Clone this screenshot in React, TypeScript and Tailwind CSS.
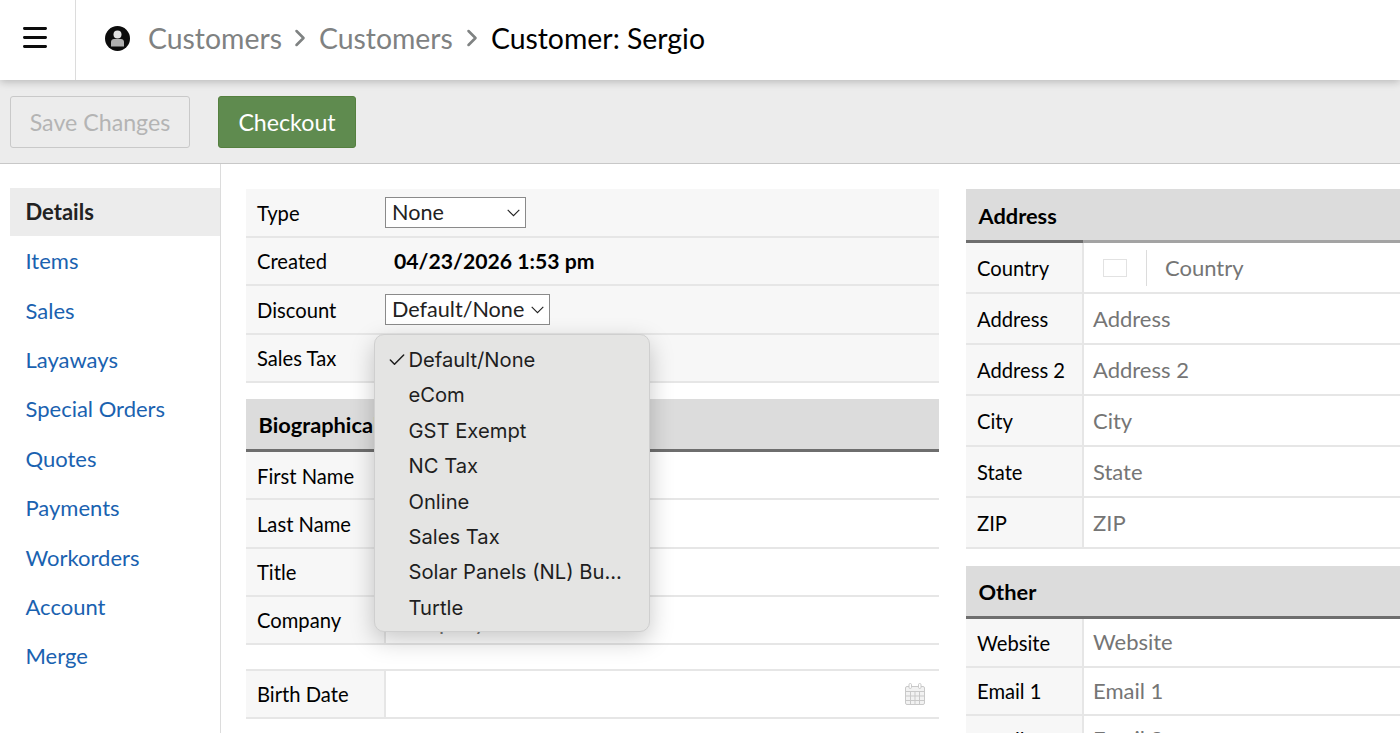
import type { ReactNode } from 'react';
import { ChevronRight, Check } from 'lucide-react';

const NAV = ['Items', 'Sales', 'Layaways', 'Special Orders', 'Quotes', 'Payments', 'Workorders', 'Account', 'Merge'];
const TAXES = ['eCom', 'GST Exempt', 'NC Tax', 'Online', 'Sales Tax', 'Solar Panels (NL) Bu...', 'Turtle'];

function UserBadge() {
  return (
    <svg width="25" height="25" viewBox="0 0 25 25" className="shrink-0">
      <circle cx="12.500" cy="12.500" r="12.500" fill="#0c0c0c" />
      <circle cx="12.500" cy="8.500" r="4" fill="#e2e2e2" />
      <path d="M6 20.500v-4.500c0-1.800 1.400-3 3-3h7c1.600 0 3 1.200 3 3v4.500z" fill="#b0b0b0" />
    </svg>
  );
}

function Hamburger() {
  return (
    <svg width="24" height="21" viewBox="0 0 24 21" fill="none" stroke="#0c0c0c" strokeWidth="2.800" strokeLinecap="round">
      <path d="M1.400 1.500h21.200M1.400 10.500h21.200M1.400 19.500h21.200" />
    </svg>
  );
}

function CalendarIcon() {
  return (
    <svg width="20" height="22" viewBox="0 0 20 22" fill="none" stroke="#c9c9c9" strokeWidth="1">
      <rect x="0.500" y="3.500" width="19" height="18" rx="1.500" fill="#f2f2f2" />
      <path d="M0.500 8.500h19M0.500 13h19M0.500 17.500h19M5.500 8.500v13M10 8.500v13M14.500 8.500v13" />
      <rect x="4" y="0.500" width="2.500" height="5" rx="1.200" fill="#fff" />
      <rect x="13.500" y="0.500" width="2.500" height="5" rx="1.200" fill="#fff" />
    </svg>
  );
}

function Row({ label, value, h = 'h-[48.250px]', w = 'w-[118px]', valueClass = 'pl-[9px]' }: { label: string; value?: string; h?: string; w?: string; valueClass?: string }) {
  return (
    <div className={`flex border-b-2 border-[#e6e6e6] ${h}`}>
      <div className={`${w} shrink-0 flex items-center pl-[11px] pt-[1px] bg-[#f7f7f7] border-r-2 border-[#e6e6e6] text-black`}>{label}</div>
      <div className={`flex-1 flex items-center bg-white text-[#757575] text-[22px] ${valueClass}`}>{value}</div>
    </div>
  );
}

function Select({ value, className }: { value: string; className: string }) {
  return (
    <div className={`h-[31px] flex items-center justify-between pl-[6px] pr-[5px] pt-[1px] bg-white border border-[#8a8a8a] text-[#222] text-[21.600px] ${className}`}>
      <span>{value}</span>
      <svg width="13" height="8" viewBox="0 0 13 8" fill="none" stroke="#222" strokeWidth="1.100" className="shrink-0">
        <path d="M0.700 0.900L6.500 6.700L12.300 0.900" />
      </svg>
    </div>
  );
}

function PlainRow({ label, children }: { label: string; children?: ReactNode }) {
  return (
    <div className="h-[48.500px] flex items-center bg-[#f7f7f7] border-b-2 border-[#e6e6e6] pl-[11px]">
      <div className="w-[128px] shrink-0 pt-[1px] text-black">{label}</div>
      {children}
    </div>
  );
}

function SectionHead({ title, h }: { title: string; h: string }) {
  return (
    <div className={`${h} flex items-center pl-[12.500px] pt-[2px] bg-[#dcdcdc] font-bold text-[21.800px] text-black`}>{title}</div>
  );
}

export default function App() {
  return (
    <div className="relative h-[733px] overflow-hidden bg-white font-['Lato',sans-serif] text-[20.200px] leading-none">
      <header className="relative z-10 h-20 flex items-center bg-white shadow-[0_2px_8px_rgba(0,0,0,0.22)]">
        <div className="w-[76px] h-full shrink-0 flex items-center justify-center border-r border-[#dcdcdc] pr-[5px] pb-[6px]">
          <Hamburger />
        </div>
        <div className="flex items-center pl-[28.500px] pb-[4px] text-[28.400px]">
          <UserBadge />
          <span className="ml-[18.500px] text-[#7f8282]">Customers</span>
          <ChevronRight size={28} strokeWidth={2.200} className="mx-[4.500px] text-[#7f8282]" />
          <span className="text-[#7f8282]">Customers</span>
          <ChevronRight size={28} strokeWidth={2.200} className="mx-[5px] text-[#7f8282]" />
          <span className="text-black">Customer: Sergio</span>
        </div>
      </header>

      <div className="h-[84px] flex items-start pt-4 pl-[10px] gap-[28px] bg-[#ececec] border-b border-[#c8c8c8] text-[23.200px]">
        <button className="w-[180px] h-[52px] pt-[2px] rounded-[3px] border border-[#c9c9c9] text-[#b4b4b4]">Save Changes</button>
        <button className="w-[138px] h-[52px] pt-[2px] rounded-[3px] bg-[#5f8b4f] border border-[#55803f] text-white">Checkout</button>
      </div>

      <div className="flex">
        <nav className="w-[221px] shrink-0 h-[569px] pt-6 pl-[10px] border-r border-[#dcdcdc] text-[22px]">
          <div className="h-12 flex items-center pl-[15.500px] bg-[#ececec] font-bold text-[#222]">Details</div>
          <div className="pt-[0.500px]">
            {NAV.map((n) => (
              <div key={n} className="h-[49.400px] flex items-center pl-[15.500px] text-[#1a62b0]">{n}</div>
            ))}
          </div>
        </nav>

        <div className="w-[693px] ml-[25px] pt-[25px] shrink-0">
          <div>
            <PlainRow label="Type"><Select value="None" className="w-[141px]" /></PlainRow>
            <PlainRow label="Created"><span className="ml-[9px] pt-[1px] font-bold text-black text-[21.200px]">04/23/2026 1:53 pm</span></PlainRow>
            <PlainRow label="Discount"><Select value="Default/None" className="w-[165px]" /></PlainRow>
            <PlainRow label="Sales Tax" />
          </div>
          <div className="mt-4">
            <SectionHead title="Biographical" h="h-[50px]" />
            <div className="h-[3px] bg-[#6e6e6e]" />
            <Row label="First Name" w="w-[140px]" />
            <Row label="Last Name" w="w-[140px]" />
            <Row label="Title" w="w-[140px]" />
            <Row label="Company" value="Company" w="w-[140px]" valueClass="pl-[8px] pt-[5px]" />
          </div>
          <div className="mt-6 border-t-2 border-[#e6e6e6]">
            <div className="flex h-12 border-b-2 border-[#e6e6e6]">
              <div className="w-[140px] shrink-0 flex items-center pl-[11px] bg-[#f7f7f7] border-r-2 border-[#e6e6e6] text-black">Birth Date</div>
              <div className="flex-1 flex items-center justify-end pr-[14px] bg-white"><CalendarIcon /></div>
            </div>
          </div>
        </div>

        <div className="flex-1 ml-[27px] pt-[25px] min-w-0">
          <SectionHead title="Address" h="h-[51px]" />
          <div className="flex h-[3px] bg-[#a3a3a3]">
            <div className="w-[117px] bg-[#6e6e6e]" />
          </div>
          <div className="flex h-[51px] border-b-2 border-[#e6e6e6]">
            <div className="w-[118px] shrink-0 flex items-center pl-[11px] pt-[1px] bg-[#f7f7f7] border-r-2 border-[#e6e6e6] text-black">Country</div>
            <div className="flex-1 flex items-center bg-white">
              <div className="ml-[19px] w-6 h-[18px] border border-[#e2e2e2]" />
              <div className="ml-[19px] h-9 border-l border-[#dcdcdc]" />
              <span className="ml-[18px] text-[#757575] text-[22px]">Country</span>
            </div>
          </div>
          {['Address', 'Address 2', 'City', 'State', 'ZIP'].map((f) => (
            <Row key={f} label={f} value={f} h="h-[51px]" />
          ))}
          <div className="mt-[17px]">
            <SectionHead title="Other" h="h-[50px]" />
            <div className="h-[3px] bg-[#6e6e6e]" />
            <Row label="Website" value="Website" h="h-[48.500px]" />
            <Row label="Email 1" value="Email 1" h="h-[48.500px]" />
            <Row label="Email 2" value="Email 2" h="h-[48.500px]" />
          </div>
        </div>
      </div>

      <div className="absolute z-20 left-[374px] top-[334px] w-[276px] h-[298px] pt-[7.500px] rounded-[10px] bg-[#e4e4e3] border border-[#cfcfcf] shadow-[0_8px_24px_rgba(0,0,0,0.22)] font-['Inter',sans-serif] text-[20.200px] text-[#1e1e1e]">
        <div className="relative h-[35.400px] flex items-center pl-[33.500px]">
          <Check size={20} strokeWidth={1.800} className="absolute left-[12px]" />
          Default/None
        </div>
        {TAXES.map((t) => (
          <div key={t} className="h-[35.400px] flex items-center pl-[33.500px]">{t}</div>
        ))}
      </div>
    </div>
  );
}
